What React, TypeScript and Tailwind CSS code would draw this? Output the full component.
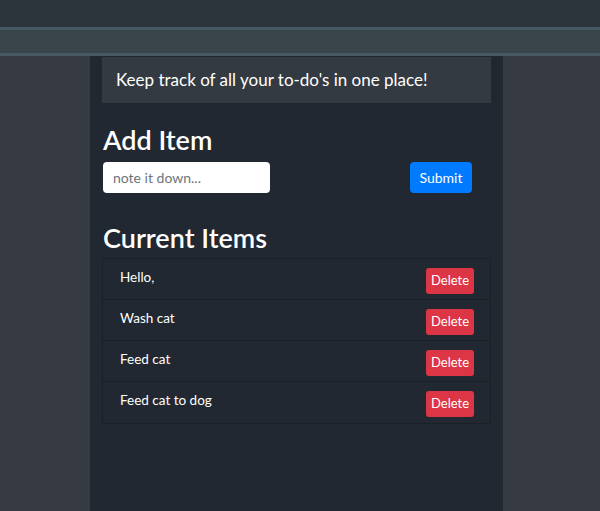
const items = ["Hello,", "Wash cat", "Feed cat", "Feed cat to dog"];

export default function App() {
  return (
    <div
      className="min-h-[511px] bg-[#363a42] text-white flex flex-col"
      style={{ fontFamily: 'Lato, "Noto Sans", sans-serif' }}
    >
      {/* top nav */}
      <div className="h-[27px] bg-[#2c353c]"></div>
      <div className="h-[29px] bg-[#39444b] border-y-[3px] border-[#465861]"></div>

      <div className="flex-1 flex">
        <div className="w-[413px] ml-[90px] bg-[#222831] pl-[12px] pr-[12px] pt-[1px]">
          <div className="bg-[#343a41] h-[46px] flex items-center pl-[14px] text-[17px]">
            Keep track of all your to-do's in one place!
          </div>

          <h2 className="text-[27px] font-semibold mt-[22px] leading-[30px] pl-[1px]">Add Item</h2>
          <div className="flex items-center justify-between mt-[7px] pl-[1px] pr-[19px]">
            <input
              className="w-[167px] h-[31px] bg-white rounded-[4px] px-[10px] text-[14px] text-gray-700 placeholder:text-[#6c757d] outline-none"
              placeholder="note it down..."
            />
            <button className="h-[31px] w-[62px] bg-[#007bff] rounded-[4px] text-[14px] text-white">
              Submit
            </button>
          </div>

          <h2 className="text-[27px] font-semibold mt-[30px] leading-[30px] pl-[1px]">Current Items</h2>
          <ul className="mt-[5px] border border-[#1b1f26]">
            {items.map((item, i) => (
              <li
                key={i}
                className="h-[41px] flex items-center justify-between pl-[17px] pr-[16px] border-b border-[#1b1f26] last:border-b-0"
              >
                <span className="text-[13.5px] -mt-[4px]">{item}</span>
                <button className="h-[26px] w-[48px] bg-[#dc3545] rounded-[3px] text-[13px] text-white mt-[3px]">
                  Delete
                </button>
              </li>
            ))}
          </ul>
        </div>
      </div>
    </div>
  );
}
